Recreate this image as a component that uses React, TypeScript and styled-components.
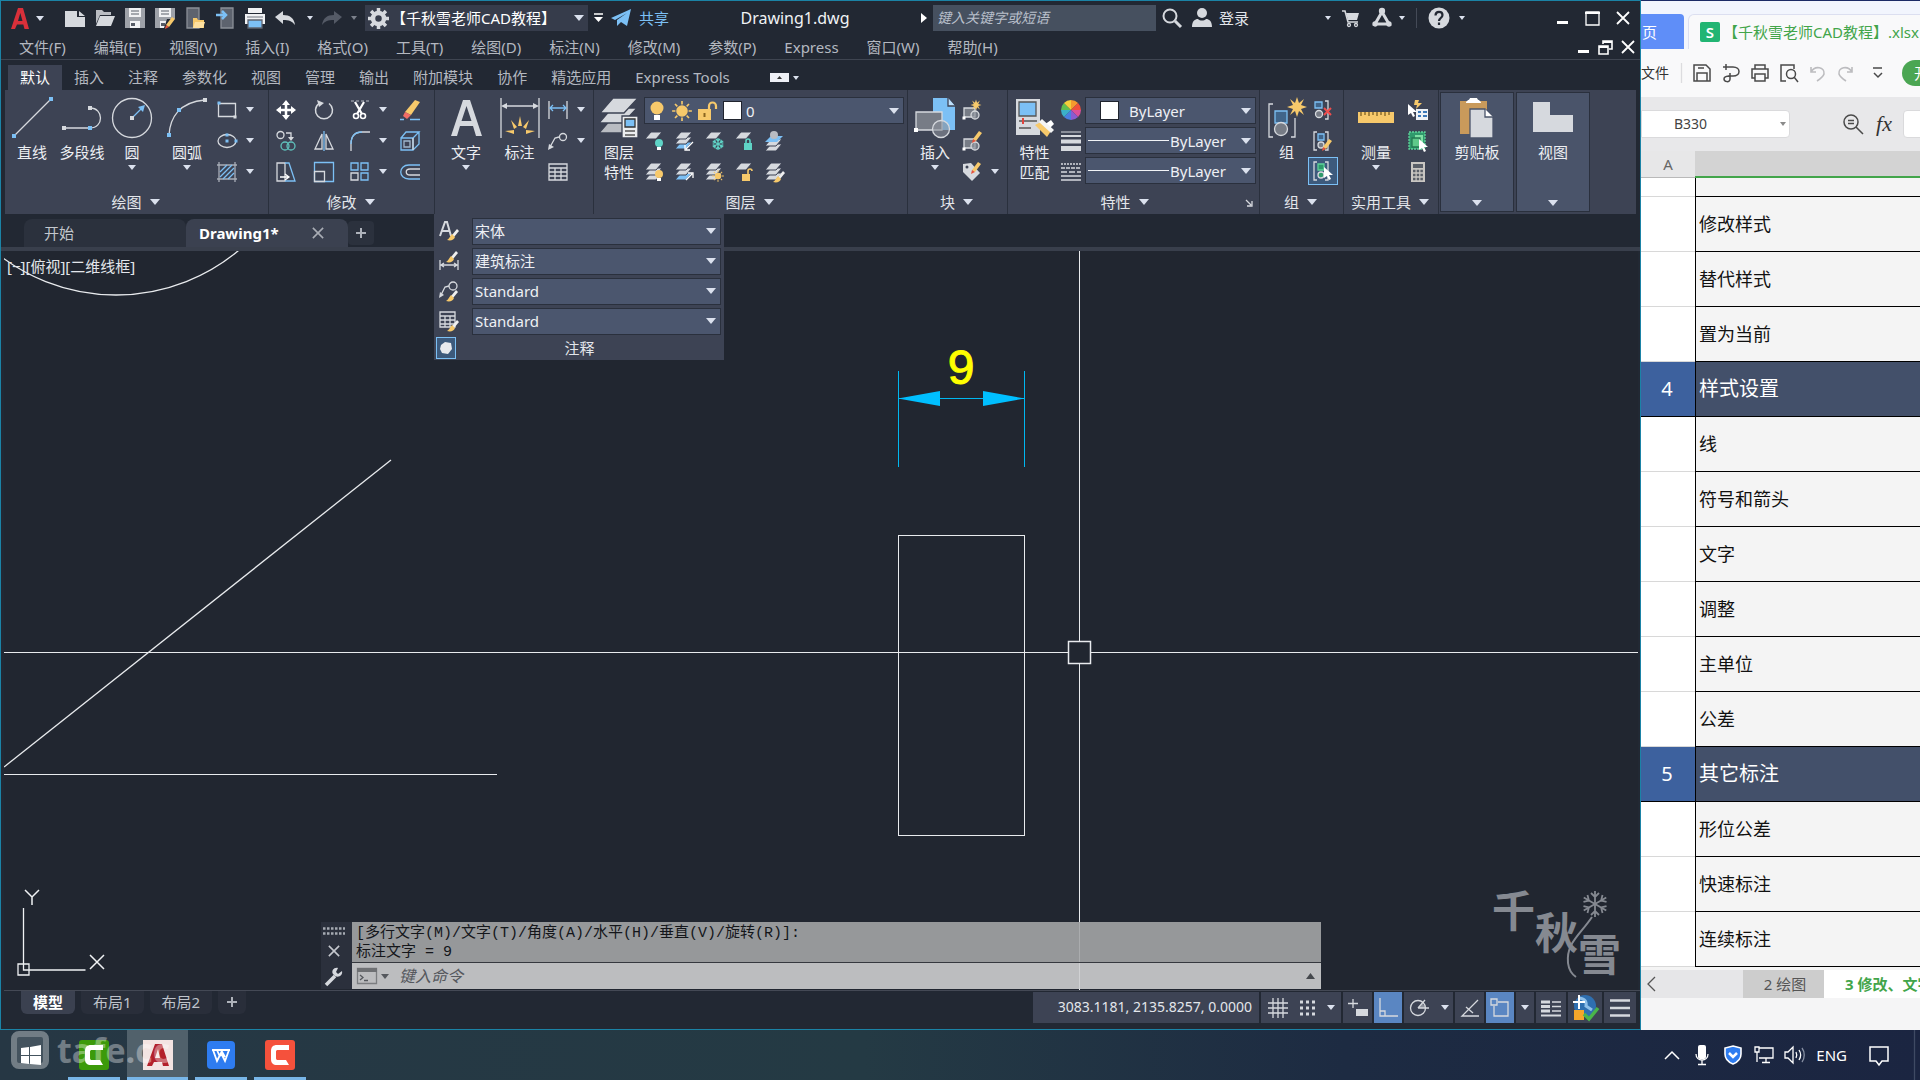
import React from "react";
import styled, { createGlobalStyle, css } from "styled-components";

const c = {
  shell: "#222833",
  canvas: "#212630",
  ribbon: "#3d4354",
  field: "#4b566e",
  panelAlt: "#4a546a",
  edge: "#2a303d",
  cyan: "#1b83a6",
  text: "#e3e6eb",
  muted: "#b4b8c0",
  light: "#d6d9de",
  blue: "#7cc0f5",
  yellow: "#f7c96b",
  green: "#42a54a",
};

const Global = createGlobalStyle`
  *, *::before, *::after { box-sizing: border-box; }
  html, body { margin: 0; padding: 0; }
  body, button, input, select, table {
    font-family: "Noto Sans", "Noto Sans CJK SC", sans-serif;
    font-size: 15px;
    line-height: 20px;
  }
  button, input, select { border: 0; padding: 0; margin: 0; background: none; color: inherit; outline: 0; }
  button { cursor: pointer; white-space: nowrap; }
  svg { display: block; flex: none; overflow: visible; }
`;

/* ---------- shell ---------- */

const Desktop = styled.div`
  display: flex;
  flex-direction: column;
  height: 100vh;
  min-width: 1200px;
  overflow: hidden;
`;

const Windows = styled.div`
  display: flex;
  flex: 1;
  min-height: 0;
`;

const CadWindow = styled.main`
  display: flex;
  flex-direction: column;
  flex: 1;
  min-width: 0;
  overflow: hidden;
  background: ${c.shell};
  color: ${c.text};
  border: 1px solid ${c.cyan};
`;

const Row = styled.div<{ $gap?: number }>`
  display: flex;
  align-items: center;
  gap: ${(p) => p.$gap ?? 0}px;
`;

const IconButton = styled.button`
  display: flex;
  align-items: center;
  justify-content: center;
  flex: none;
`;

const CaretShape = styled.span<{ $size?: number; $color?: string }>`
  flex: none;
  width: 0;
  height: 0;
  border-left: ${(p) => p.$size ?? 4}px solid transparent;
  border-right: ${(p) => p.$size ?? 4}px solid transparent;
  border-top: ${(p) => (p.$size ?? 4) + 1}px solid ${(p) => p.$color ?? "#dbe1ee"};
  pointer-events: none;
`;

/* ---------- title bar ---------- */

const TitleBar = styled.header`
  display: flex;
  align-items: center;
  flex: none;
  height: 34px;
  padding: 0 10px 0 9px;
`;

const QuickAccess = styled(Row)`
  margin-left: 21px;
  gap: 10px;
`;

const HistoryTools = styled(Row)`
  margin: 0 8px 0 12px;
  gap: 9px;
`;

const Workspace = styled.label`
  display: flex;
  align-items: center;
  gap: 2px;
  width: 223px;
  height: 26px;
  padding: 0 4px 0 3px;
  background: #363c4b;
  color: #fff;
`;

const PlainSelect = styled.select`
  appearance: none;
  flex: 1;
  min-width: 0;
  height: 24px;
  line-height: 24px;
`;

const Share = styled.button`
  display: flex;
  align-items: center;
  gap: 8px;
  margin-left: 6px;
  color: ${c.blue};
`;

const DocTitle = styled.h1`
  flex: 1;
  margin: 0;
  font-size: 16px;
  font-weight: 400;
  line-height: 20px;
  text-align: center;
  color: #f0f2f5;
`;

const SearchBox = styled.input`
  width: 223px;
  height: 26px;
  padding: 0 4px 2px;
  background: #46505f;
  font-size: 14px;
  &::placeholder { color: #b8bfca; font-style: italic; opacity: 1; }
`;

const Divider = styled.span`
  width: 1px;
  height: 20px;
  background: #444a57;
`;

const Account = styled(Row)`
  margin-left: 10px;
  gap: 7px;
`;

const HeaderTools = styled(Row)`
  margin-left: 76px;
  gap: 11px;
`;

const WindowButtons = styled(Row)<{ $small?: boolean }>`
  margin-left: ${(p) => (p.$small ? "auto" : "92px")};
  gap: ${(p) => (p.$small ? 8 : 16)}px;
`;

/* ---------- menus and tabs ---------- */

const MenuBar = styled.nav`
  display: flex;
  align-items: center;
  flex: none;
  height: 25px;
  gap: 28px;
  padding: 0 5px 0 18px;
  border-bottom: 1px solid #3f4551;
  color: ${c.muted};
`;

const RibbonTabs = styled.div`
  display: flex;
  align-items: flex-end;
  flex: none;
  height: 30px;
  padding-left: 7px;
  color: ${c.muted};
`;

const RibbonTab = styled.button<{ $active?: boolean }>`
  height: 25px;
  padding: 0 12px 2px;
  ${(p) =>
    p.$active &&
    css`
      background: ${c.ribbon};
      color: #fff;
    `}
`;

const RibbonToggle = styled.button`
  display: flex;
  align-items: center;
  gap: 4px;
  height: 25px;
  margin-left: 28px;
`;

/* ---------- ribbon ---------- */

const Ribbon = styled.div`
  display: flex;
  flex: none;
  height: 124px;
  margin: 0 4px;
  background: ${c.ribbon};
`;

const PanelBox = styled.section<{ $w: number }>`
  position: relative;
  display: flex;
  flex-direction: column;
  flex: none;
  width: ${(p) => p.$w}px;
  border-right: 1px solid ${c.edge};
`;

const PanelBody = styled.div<{ $pad?: number }>`
  display: flex;
  flex: 1;
  padding-left: ${(p) => p.$pad ?? 0}px;
`;

const PanelTitle = styled.button<{ $right?: number }>`
  display: flex;
  align-items: center;
  justify-content: center;
  gap: 8px;
  height: 22px;
  width: 100%;
  padding: 0 ${(p) => p.$right ?? 2}px 2px 0;
  color: ${c.text};
`;

const Launcher = styled.span`
  position: absolute;
  right: 6px;
  bottom: 7px;
`;

const BigButton = styled.button<{ $w: number }>`
  display: flex;
  flex-direction: column;
  align-items: center;
  flex: none;
  width: ${(p) => p.$w}px;
  padding-top: 8px;
  color: #eceef2;
`;

const BigLabel = styled.span`
  display: block;
  margin: 4px 0 3px;
  white-space: pre-line;
`;

const ToolGrid = styled.div<{ $cols: string; $pad?: number }>`
  display: grid;
  grid-template-columns: ${(p) => p.$cols};
  grid-auto-rows: 31px;
  align-content: start;
  padding-top: ${(p) => p.$pad ?? 4}px;
`;

const Tool = styled.button<{ $on?: boolean }>`
  display: flex;
  align-items: center;
  gap: 9px;
  ${(p) =>
    p.$on &&
    css`
      justify-content: center;
      width: 30px;
      height: 28px;
      margin-top: 1px;
      margin-left: -5px;
      background: #3d5a7c;
      border: 1px solid ${c.blue};
    `}
`;

const Stack = styled.div<{ $gap: number; $top: number }>`
  display: flex;
  flex-direction: column;
  gap: ${(p) => p.$gap}px;
  padding-top: ${(p) => p.$top}px;
`;

const Combo = styled.label<{ $w?: number }>`
  display: flex;
  align-items: center;
  flex: none;
  width: ${(p) => (p.$w ? `${p.$w}px` : "auto")};
  height: 27px;
  padding: 0 4px 0 2px;
  background: ${c.field};
  border: 1px solid ${c.edge};
  color: #eef0f4;
`;

const Swatch = styled.span<{ $tight?: boolean }>`
  width: 19px;
  height: 19px;
  margin: 0 ${(p) => (p.$tight ? 4 : 10)}px 0 ${(p) => (p.$tight ? 6 : 12)}px;
  background: #fff;
  border: 1px solid #20242e;
`;

const LineSample = styled.span`
  width: 81px;
  height: 1px;
  margin-right: 1px;
  background: #f2f4f7;
`;

const AltPanel = styled.button`
  display: flex;
  flex-direction: column;
  align-items: center;
  flex: none;
  width: 74px;
  margin: 2px 1px;
  padding: 5px 0 5px;
  background: ${c.panelAlt};
  border: 1px solid ${c.edge};
  color: #eceef2;
  ${CaretShape} { margin-top: auto; }
`;

const Flyout = styled.div`
  position: absolute;
  z-index: 5;
  top: 124px;
  left: -1px;
  width: 290px;
  padding: 2px 3px 0 2px;
  background: ${c.ribbon};
`;

const StyleRow = styled.div`
  display: grid;
  grid-template-columns: 33px 1fr;
  align-items: center;
  height: 30px;
  padding-left: 3px;
`;

const FlyoutFoot = styled.div`
  display: flex;
  align-items: center;
  height: 24px;
  > span { flex: 1; text-align: center; padding-right: 18px; }
`;

const Pin = styled.button`
  display: flex;
  align-items: center;
  justify-content: center;
  width: 20px;
  height: 22px;
  background: #3d5a7c;
  border: 1px solid ${c.blue};
`;

/* ---------- document area ---------- */

const DocTabs = styled.div`
  display: flex;
  align-items: flex-end;
  flex: none;
  height: 37px;
  padding-left: 23px;
  border-bottom: 4px solid #393f4c;
`;

const DocTab = styled.button<{ $active?: boolean }>`
  display: flex;
  align-items: center;
  justify-content: space-between;
  width: 162px;
  height: 28px;
  padding: 0 24px 0 ${(p) => (p.$active ? 13 : 20)}px;
  border-radius: 8px 8px 0 0;
  background: ${(p) => (p.$active ? "#3b4150" : "#2b313d")};
  color: ${(p) => (p.$active ? "#fff" : "#c3c7ce")};
  font-weight: ${(p) => (p.$active ? 700 : 400)};
`;

const AddTab = styled.button`
  display: flex;
  align-items: center;
  justify-content: center;
  width: 26px;
  height: 24px;
  margin-bottom: 2px;
  background: #2b313d;
  border-radius: 4px;
`;

const CanvasArea = styled.div`
  position: relative;
  flex: 1;
  min-height: 0;
  margin: 0 2px 0 3px;
  background: ${c.canvas};
  overflow: hidden;
`;

const Drawing = styled.svg`
  width: 100%;
  height: 100%;
`;

const ViewLabel = styled.div`
  position: absolute;
  top: 5px;
  left: 3px;
`;

const Ucs = styled.div`
  position: absolute;
  left: 12px;
  bottom: 12px;
`;

const Brand = styled.div`
  position: absolute;
  right: 16px;
  bottom: 6px;
  display: grid;
  grid-template-columns: 43px 43px 44px;
  height: 106px;
  color: #858991;
  font-family: "Noto Sans CJK SC", sans-serif;
  font-weight: 700;
  font-size: 43px;
  line-height: 60px;
  white-space: nowrap;
`;

const BrandChar = styled.span<{ $drop: number }>`
  padding-top: ${(p) => p.$drop}px;
`;

const BrandFlake = styled.div`
  position: absolute;
  right: 14px;
  top: 13px;
`;

const CommandLine = styled.div`
  position: absolute;
  left: 317px;
  right: 317px;
  bottom: 1px;
  display: flex;
  color: #14161a;
`;

const CommandHandle = styled.div`
  display: flex;
  flex-direction: column;
  align-items: center;
  justify-content: space-between;
  width: 31px;
  padding: 5px 5px 2px 0;
  background: #2b303c;
`;

const CommandMain = styled.div`
  display: flex;
  flex-direction: column;
  flex: 1;
`;

const CommandHistory = styled.div`
  height: 41px;
  padding: 2px 4px;
  background: rgba(163, 165, 166, 0.9);
  border-bottom: 1px solid #35383e;
  font-family: "Liberation Mono", "Noto Sans CJK SC", monospace;
  line-height: 19px;
  white-space: pre;
`;

const CommandInputRow = styled.label`
  display: flex;
  align-items: center;
  height: 26px;
  gap: 4px;
  padding: 0 6px 0 5px;
  background: rgba(205, 206, 207, 0.9);
`;

const CommandInput = styled.input`
  flex: 1;
  padding-left: 6px;
  font-size: 16px;
  &::placeholder { color: #55585d; font-style: italic; opacity: 1; }
`;

/* ---------- status bar ---------- */

const StatusBar = styled.footer`
  display: flex;
  flex: none;
  height: 39px;
  margin-left: 3px;
  padding-right: 4px;
  border-top: 1px solid #444955;
`;

const LayoutTabs = styled.div`
  display: flex;
  flex: 1;
  gap: 6px;
  padding-left: 17px;
  color: #bfc3ca;
`;

const LayoutTab = styled.button<{ $active?: boolean; $tight?: boolean }>`
  height: 23px;
  padding: 0 ${(p) => (p.$tight ? 8 : 12)}px 2px;
  border-radius: 0 0 6px 6px;
  background: ${(p) => (p.$active ? "#3b4150" : "#292e3a")};
  color: ${(p) => (p.$active ? "#fff" : "inherit")};
  font-weight: ${(p) => (p.$active ? 700 : 400)};
`;

const StatusTools = styled.div`
  display: flex;
  gap: 2px;
  padding-top: 1px;
  height: 32px;
`;

const Coordinates = styled.output`
  width: 226px;
  padding: 5px 7px 0 0;
  text-align: right;
  font-size: 14px;
  background: ${c.ribbon};
  white-space: nowrap;
`;

const StatusButton = styled.button<{ $w: number; $on?: boolean }>`
  display: flex;
  align-items: center;
  justify-content: center;
  gap: 12px;
  width: ${(p) => p.$w}px;
  background: ${(p) => (p.$on ? "#5a86c2" : c.ribbon)};
`;

/* ---------- spreadsheet window ---------- */

const SheetWindow = styled.aside`
  display: flex;
  flex-direction: column;
  flex: 0 0 279px;
  min-width: 0;
  overflow: hidden;
  border-top: 1px solid #1c2b66;
  background: #f4f4f5;
  color: #222;
  white-space: nowrap;
`;

const BookTabs = styled.div`
  display: flex;
  align-items: flex-end;
  flex: none;
  height: 48px;
  background: #f2f5fd;
`;

const HomeTab = styled.button`
  flex: none;
  width: 43px;
  height: 35px;
  margin-right: 4px;
  padding-left: 1px;
  border-radius: 0 4px 0 0;
  background: #5f8ef8;
  color: #fff;
  text-align: left;
`;

const BookTab = styled.button`
  display: flex;
  align-items: center;
  flex: none;
  width: 300px;
  height: 35px;
  padding-left: 11px;
  border-radius: 6px 0 0 0;
  background: #f9f9fa;
  border: 1px solid #dcdff0;
  border-bottom: 0;
  color: ${c.green};
`;

const BookIcon = styled.span`
  width: 20px;
  height: 20px;
  margin-right: 3px;
  border-radius: 2px;
  background: #22b573;
  color: #fff;
  font-weight: 600;
  text-align: center;
`;

const BookToolbar = styled.div`
  display: flex;
  align-items: center;
  flex: none;
  height: 48px;
  gap: 11px;
  background: #f9f9fa;
  color: #333;
`;

const FileMenu = styled.button`
  flex: none;
  width: 29px;
  font-size: 14px;
  text-align: left;
`;

const StartTab = styled.button`
  flex: none;
  width: 60px;
  height: 26px;
  padding-left: 12px;
  border-radius: 13px;
  background: #4ba653;
  color: #fff;
  text-align: left;
`;

const FormulaBar = styled.div`
  display: flex;
  align-items: center;
  flex: none;
  height: 54px;
  background: #e8e8ea;
`;

const NameBox = styled.label`
  display: flex;
  align-items: center;
  flex: none;
  width: 149px;
  height: 28px;
  padding: 0 3px 0 32px;
  border-radius: 0 4px 4px 0;
  border: 1px solid #dadadc;
  background: #fff;
`;

const NameInput = styled.input`
  flex: 1;
  min-width: 0;
  font-size: 14px;
  color: #444;
`;

const Fx = styled.button`
  flex: none;
  width: 20px;
  margin: 0 9px 0 10px;
  font-family: "Liberation Serif", serif;
  font-style: italic;
  font-size: 22px;
  color: #333;
`;

const FormulaInput = styled.input`
  flex: none;
  width: 200px;
  height: 28px;
  padding-left: 14px;
  border-radius: 4px;
  border: 1px solid #dadadc;
  background: #fff;
`;

const SheetBody = styled.div`
  flex: 1;
  min-height: 0;
  overflow: hidden;
  background: #f4f4f4;
`;

const Grid = styled.table`
  width: 100%;
  table-layout: fixed;
  border-collapse: separate;
  border-spacing: 0;
`;

const ColHead = styled.th<{ $active?: boolean }>`
  width: ${(p) => (p.$active ? "auto" : "54px")};
  height: 27px;
  padding: 0;
  font-weight: 400;
  color: #666;
  background: ${(p) => (p.$active ? "#d3d3d3" : "#e7e7e8")};
  border-bottom: ${(p) => (p.$active ? `2px solid ${c.green}` : "1px solid #b9b9b9")};
`;

const NumCell = styled.td<{ $head?: boolean; $h?: number }>`
  height: ${(p) => p.$h ?? 55}px;
  padding: 0 2px 0 0;
  text-align: center;
  font-size: 20px;
  color: #fff;
  background: ${(p) => (p.$head ? "#3d619e" : "#fff")};
  border-bottom: 1px solid ${(p) => (p.$head ? "#000" : "#d8d8d8")};
`;

const TextCell = styled.td<{ $head?: boolean }>`
  padding: 0 3px;
  font-size: ${(p) => (p.$head ? 20 : 18)}px;
  line-height: 24px;
  color: ${(p) => (p.$head ? "#fff" : "#111")};
  background: ${(p) => (p.$head ? "#43506a" : "#f4f4f4")};
  border-left: 1px solid #000;
  border-bottom: 1px solid #000;
`;

const SheetTabs = styled.div`
  display: flex;
  flex: none;
  height: 28px;
  background: #e6e6e8;
`;

const SheetNav = styled.button`
  flex: none;
  width: 102px;
  padding-left: 5px;
`;

const SheetTab = styled.button<{ $active?: boolean }>`
  flex: none;
  width: ${(p) => (p.$active ? 160 : 81)}px;
  padding-left: ${(p) => (p.$active ? 21 : 3)}px;
  text-align: ${(p) => (p.$active ? "left" : "center")};
  background: ${(p) => (p.$active ? "#fff" : "#cdcdcd")};
  color: ${(p) => (p.$active ? c.green : "#555")};
  font-weight: ${(p) => (p.$active ? 700 : 400)};
`;

const SheetFoot = styled.div`
  flex: none;
  height: 32px;
  background: #f5f5f6;
`;

/* ---------- taskbar ---------- */

const Taskbar = styled.footer`
  position: relative;
  display: flex;
  flex: none;
  height: 50px;
  gap: 7px;
  background: linear-gradient(90deg, #263744 0%, #243a44 45%, #1d2b42 70%, #1b2541 100%);
  color: #fff;
`;

const StartButton = styled.button`
  display: flex;
  align-items: center;
  justify-content: center;
  width: 61px;
`;

const TaskButton = styled.button<{ $active?: boolean }>`
  display: flex;
  align-items: center;
  justify-content: center;
  width: ${(p) => (p.$active ? 61 : 52)}px;
  background: ${(p) => (p.$active ? "#51616b" : "transparent")};
  box-shadow: inset 0 -3px 0 #78b6e8;
`;

const Tray = styled.div`
  display: flex;
  align-items: center;
  gap: 12px;
  margin-left: auto;
  padding-right: 5px;
`;

const Stamp = styled.div`
  position: absolute;
  left: 11px;
  top: 1px;
  display: flex;
  align-items: center;
  gap: 8px;
  height: 38px;
  font-family: "Open Sans", sans-serif;
  font-size: 34px;
  font-weight: 700;
  line-height: 38px;
  color: #fff;
  opacity: 0.35;
  pointer-events: none;
`;

const StampBox = styled.span`
  width: 38px;
  height: 38px;
  border: 6px solid #fff;
  border-radius: 8px;
  background: rgba(255, 255, 255, 0.4);
`;

/* ---------- icons ---------- */

type IcoProps = { w?: number; h?: number; vb?: string; children: React.ReactNode };

const Ico = ({ w = 20, h = 20, vb, children }: IcoProps) => (
  <svg width={w} height={h} viewBox={vb ?? `0 0 ${w} ${h}`} fill="none" stroke={c.light} strokeWidth="1.3" aria-hidden="true">
    {children}
  </svg>
);

const Dot = ({ x, y, r = 2, f = c.blue }: { x: number; y: number; r?: number; f?: string }) => (
  <rect x={x - r} y={y - r} width={r * 2} height={r * 2} fill={f} stroke="none" />
);

const Pencil = ({ x = 0, y = 0 }: { x?: number; y?: number }) => (
  <g transform={`translate(${x} ${y})`} stroke="none">
    <path d="M7 0l3 2-6 8-3-2z" fill={c.yellow} />
    <path d="M1 8l3 2-4 2z" fill="#e5533c" />
  </g>
);

const Brush = ({ x = 0, y = 0 }: { x?: number; y?: number }) => (
  <g transform={`translate(${x} ${y})`} stroke="none">
    <path d="M10 0l2 2-5 6-2-2z" fill="#f0f0f0" />
    <path d="M5 5l3 3c-1 3-4 4-8 3 2-1 3-4 5-6z" fill={c.yellow} />
  </g>
);

const Burst = ({ x, y, s = 1 }: { x: number; y: number; s?: number }) => (
  <path
    transform={`translate(${x} ${y}) scale(${s})`}
    d="M0-10l2 6 5-4-3 6 6 2-6 2 3 6-5-4-2 6-2-6-5 4 3-6-6-2 6-2-3-6 5 4z"
    fill={c.yellow}
    stroke="none"
  />
);

const AutodeskA = ({ w = 20, h = 21, color = "#d9303a" }: { w?: number; h?: number; color?: string }) => (
  <svg width={w} height={h} viewBox="0 0 20 21" aria-hidden="true">
    <path d="M8 0h5l6 21h-4.500l-1.200-4.500H7L5 21H1zM10.300 5L8 13h4.500z" fill={color} fillRule="evenodd" />
  </svg>
);

const NewIcon = () => (
  <Ico><path d="M0 3h12v6h8v10H0zM14 3l6 5h-6z" fill={c.light} stroke="none" /></Ico>
);
const OpenIcon = () => (
  <Ico><path d="M1 2h6l2 2h7v3H5L1 16z" fill="#b9bcc2" stroke="none" /><path d="M5 8h15l-4 10H1z" fill={c.light} stroke="none" /></Ico>
);
const SaveIcon = ({ edit }: { edit?: boolean }) => (
  <Ico>
    <path d="M0 0h20v20H0z" fill="#9ea2a9" stroke="none" />
    <path d="M4 0h12v9H4zM5 13h10v7H5z" fill="#f0f1f3" stroke="none" />
    <path d="M6 3h8M6 6h8" stroke="#8b9098" /><path d="M6 15h4v3H6z" fill="#555b66" stroke="none" />
    {edit && <><path d="M9 20l3-9h8v9z" fill={c.shell} stroke="none" /><Pencil x={10} y={9} /></>}
  </Ico>
);
const DeviceFolder = () => (
  <Ico><path d="M2 0h12v20H2z" fill="#5d636e" stroke="#8b9098" /><path d="M8 10h4l1 2h6v8H8z" fill={c.yellow} stroke="none" /><path d="M10 14h10l-2 6H8z" fill="#ffe1a0" stroke="none" /></Ico>
);
const DeviceArrow = () => (
  <Ico><path d="M6 0h12v20H6z" fill="#5d636e" stroke="#8b9098" /><path d="M1 7h9M7 3l4 4-4 4" stroke={c.blue} strokeWidth="2.500" /></Ico>
);
const PrintIcon = () => (
  <Ico><path d="M3 0h14v5H3zM0 6h20v10H0z" fill="#f0f1f3" stroke="none" /><path d="M3 12h14v8H3z" fill={c.blue} stroke="#5d636e" /><path d="M2 9h16" stroke="#8b9098" /></Ico>
);
const UndoIcon = ({ flip, dim }: { flip?: boolean; dim?: boolean }) => (
  <Ico><g transform={flip ? "matrix(-1 0 0 1 20 0)" : undefined}><path d="M0 9l8-6v4c7 0 11 3 12 10-3-4-6-5-12-5v4z" fill={dim ? "#545a66" : c.light} stroke="none" /></g></Ico>
);
const GearIcon = () => (
  <Ico w={21} h={21}>
    <circle cx="10.500" cy="10.500" r="5.500" stroke={c.light} strokeWidth="4.500" />
    <g stroke={c.light} strokeWidth="3.500">{[0, 45, 90, 135].map((a) => <path key={a} transform={`rotate(${a} 10.500 10.500)`} d="M10.500 0v4M10.500 17v4" />)}</g>
  </Ico>
);
const PlaneIcon = () => (
  <Ico><path d="M0 10L20 1l-4 17-6-4-4 4v-6L16 5 4 12z" fill={c.blue} stroke="none" /></Ico>
);
const SearchIcon = () => (
  <Ico><circle cx="8" cy="8" r="6.500" strokeWidth="2" /><path d="M13 13l6 6" strokeWidth="3" /></Ico>
);
const PersonIcon = () => (
  <Ico><circle cx="10" cy="5" r="5" fill={c.light} stroke="none" /><path d="M0 19c0-6 3-8 6-8 2 2 6 2 8 0 3 0 6 2 6 8z" fill={c.light} stroke="none" /></Ico>
);
const CartIcon = () => (
  <Ico w={18}><path d="M0 3h3l3 11h10" strokeWidth="1.600" /><path d="M4 5h13l-2 7H6z" fill={c.light} stroke="none" /><circle cx="7" cy="17" r="1.500" /><circle cx="14" cy="17" r="1.500" /></Ico>
);
const AppsIcon = () => (
  <Ico><path d="M10 4L3 16h14z" strokeWidth="3" /><circle cx="10" cy="3" r="2.500" fill={c.light} /><circle cx="3" cy="16" r="2" fill={c.light} /><circle cx="17" cy="16" r="2" fill={c.light} /></Ico>
);
const HelpIcon = () => (
  <Ico w={22} h={22}><circle cx="11" cy="11" r="10.500" fill={c.light} stroke="none" /><path d="M7.500 8.500c0-5 7-4.500 7-.5 0 3-3.500 3-3.500 6M11 15.500v2.500" stroke={c.shell} strokeWidth="2.200" /></Ico>
);
const MinIcon = () => <Ico w={12} h={16}><path d="M0 12.500h11" stroke="#fff" strokeWidth="3" /></Ico>;
const MaxIcon = () => <Ico w={15} h={15}><path d="M1 1h13v13H1z" stroke="#fff" /><path d="M0 2h15" stroke="#fff" strokeWidth="2" /></Ico>;
const RestoreIcon = () => <Ico w={15} h={15}><path d="M5 4V1h9v8h-3M1 6h9v8H1z" stroke="#fff" strokeWidth="1.600" /><path d="M1 7h9M5 2h9" stroke="#fff" strokeWidth="2" /></Ico>;
const CloseIcon = ({ s = 14, color = "#fff" }: { s?: number; color?: string }) => (
  <Ico w={s} h={s} vb="0 0 14 14"><path d="M1 1l12 12M13 1L1 13" stroke={color} strokeWidth="1.800" /></Ico>
);
const PlusIcon = () => <Ico w={12} h={12}><path d="M6 1v10M1 6h10" stroke="#aeb2ba" strokeWidth="2" /></Ico>;

const big = { w: 40, h: 40 };
const LineIcon = () => <Ico {...big}><path d="M2 38L39 1" /><Dot x={2} y={38} /><Dot x={39} y={1} /></Ico>;
const PolyIcon = () => <Ico {...big}><path d="M2 30h26c14 0 14-20 0-20" /><Dot x={2} y={30} f={c.light} /><Dot x={28} y={30} /><Dot x={28} y={10} f={c.light} /></Ico>;
const CircleIcon = () => <Ico {...big}><circle cx="20" cy="20" r="19.500" /><path d="M20 20l10-10" stroke={c.blue} /><path d="M33 7l-2 7-5-5z" fill={c.blue} stroke="none" /><Dot x={20} y={20} f={c.light} /></Ico>;
const ArcIcon = () => <Ico {...big}><path d="M2 37C3 20 12 4 38 2" /><Dot x={2} y={37} /><Dot x={12} y={12} /><Dot x={38} y={2} f={c.light} /></Ico>;
const RectIcon = () => <Ico><path d="M1.500 3.500h17v13h-17z" /><Dot x={2} y={3} r={1.500} /><Dot x={18} y={17} r={1.500} f={c.light} /></Ico>;
const EllipseIcon = () => <Ico><ellipse cx="10" cy="10" rx="9" ry="6.500" /><Dot x={10} y={4} r={1.500} /><Dot x={10} y={10} r={1.500} /><Dot x={19} y={10} r={1.500} /></Ico>;
const HatchIcon = () => <Ico><path d="M0 3h20M0 17h20M2 0v20M18 0v20" stroke="#a8adb7" /><path d="M3 10l7-7M3 15L15 3M6 17L17 6M11 17l6-6" stroke={c.blue} /></Ico>;
const MoveIcon = () => (
  <Ico><path d="M10 2v16M2 10h16" strokeWidth="2.500" stroke="#fff" /><path d="M10 0l4 5H6zM10 20l4-5H6zM0 10l5-4v8zM20 10l-5-4v8z" fill="#fff" stroke="none" /></Ico>
);
const RotateIcon = () => <Ico><path d="M5 3.500A8.500 8.500 0 1 0 15 3.500" strokeWidth="1.500" /><path d="M9 0l7 3-5 4z" fill={c.light} stroke="none" transform="translate(-6 0)" /></Ico>;
const TrimIcon = () => <Ico><path d="M1 1h18" stroke="#8f949e" strokeDasharray="3 2" /><path d="M5 2l7 12M14 2L7 14" stroke="#fff" strokeWidth="2.200" /><circle cx="6" cy="16" r="2.500" stroke="#fff" strokeWidth="1.600" /><circle cx="13" cy="16" r="2.500" stroke="#fff" strokeWidth="1.600" /></Ico>;
const EraseIcon = () => <Ico><path d="M15 0l5 2-9 13-6-3z" fill={c.yellow} stroke="none" /><path d="M5 12l6 3-4 4-4-3z" fill="#f06d66" stroke="none" /><path d="M0 19.500h4M10 19.500h10" stroke={c.blue} /></Ico>;
const CopyIcon = () => <Ico><circle cx="4.500" cy="4" r="3.500" /><path d="M10 2h5v5" /><path d="M12 6h6l-3 4z" fill={c.light} stroke="none" /><g stroke="#5fc0bb"><circle cx="9" cy="15" r="4" /><circle cx="15" cy="15" r="4" /></g></Ico>;
const MirrorIcon = () => <Ico><path d="M10 0v20" stroke={c.blue} /><path d="M8 3v15H1zM12 3v15h7z" /></Ico>;
const FilletIcon = () => <Ico><path d="M1 20V13C1 5 5 1 12 1h8" /><path d="M1 13C1 5 5 1 12 1" stroke={c.blue} /></Ico>;
const BoxIcon = () => <Ico><path d="M1 7h12v12H1zM1 7l5-6h13l-6 6M19 1v12l-6 6" stroke={c.blue} /><path d="M4 10h6v6H4z" stroke="#9fb6cc" /><path d="M13 7v12" /></Ico>;
const StretchIcon = () => <Ico><path d="M1 1h8v18H1z" /><path d="M9 1h4l6 18H9" stroke={c.blue} /><path d="M4 15h8M9 12l4 3-4 3" stroke="#fff" /></Ico>;
const ScaleIcon = () => <Ico><path d="M.5.5h19v19H.5z" stroke={c.blue} /><path d="M.5 9.500h10v10H.5z" /></Ico>;
const ArrayIcon = () => <Ico><path d="M1 1h7v7H1zM11 1h7v7h-7zM11 11h7v7h-7z" stroke={c.blue} /><path d="M1 11h7v7H1z" /></Ico>;
const OffsetIcon = () => <Ico><path d="M20 3H9C-2 3-2 17 9 17h11" stroke={c.blue} /><path d="M20 7H10c-5 0-5 6 0 6h10" /></Ico>;
const TextIcon = () => <Ico {...big}><path d="M17 2h7l12 36h-6l-3-10H14l-3 10H5zM20.500 8l-5 15h10z" fill={c.light} fillRule="evenodd" stroke="none" /></Ico>;
const DimBigIcon = () => (
  <Ico {...big}><path d="M1 0v40M39 0v40M3 8h34" /><path d="M1 8l6-3v6zM39 8l-6-3v6z" fill={c.light} stroke="none" /><path d="M20 18l2 10h-4zM11 22l6 7-3 2zM29 22l-6 7 3 2zM5 33l9-1v4zM35 33l-9-1v4z" fill={c.yellow} stroke="none" /></Ico>
);
const DimIcon = () => <Ico><path d="M1 1v18M19 1v18" /><path d="M2 8h16M5 5L2 8l3 3M15 5l3 3-3 3" stroke={c.blue} /></Ico>;
const LeaderIcon = () => <Ico><circle cx="15" cy="6" r="3.500" /><path d="M11 6L7 7 2 16" /><path d="M0 19l1-6 5 3z" fill={c.light} stroke="none" /></Ico>;
const TableIcon = () => <Ico><path d="M1 2h18v16H1zM1 6h18M1 10h18M1 14h18M7 6v12M13 6v12" /></Ico>;

const Sheets = ({ n = 3, y = 0, last = "#d6d9de" }: { n?: number; y?: number; last?: string }) => (
  <g stroke={c.ribbon} strokeWidth="1">
    {Array.from({ length: n }, (_, i) => n - 1 - i).map((i) => (
      <path key={i} d={`M7 ${y + i * 5}h11l-6 7H1z`} fill={i === n - 1 ? last : "#d6d9de"} />
    ))}
  </g>
);
const BulbShape = ({ x, y, f }: { x: number; y: number; f: string }) => (
  <g stroke="none"><circle cx={x} cy={y} r="4" fill={f} /><path d={`M${x - 2} ${y + 4}h4v3h-4z`} fill="#fff" /></g>
);
const LockShape = ({ x, y, f, open }: { x: number; y: number; f: string; open?: boolean }) => (
  <g><path d={open ? `M${x + 6} ${y}v-3a2 2 0 0 1 4 0` : `M${x + 2} ${y}v-2a2 2 0 0 1 4 0v2`} stroke={f} strokeWidth="1.600" /><path d={`M${x} ${y}h8v7h-8z`} fill={f} stroke="none" /></g>
);
const SunShape = ({ x, y, s = 1, f = c.yellow }: { x: number; y: number; s?: number; f?: string }) => (
  <g transform={`translate(${x} ${y}) scale(${s})`} stroke={f} strokeWidth="1.500">
    <circle r="4.500" fill={f} />
    {[0, 45, 90, 135].map((a) => <path key={a} transform={`rotate(${a})`} d="M0-9v3M0 6v3" />)}
  </g>
);
const SnowShape = ({ x, y }: { x: number; y: number }) => (
  <g transform={`translate(${x} ${y})`} stroke="#5fd3c6" strokeWidth="1.300">
    {[0, 60, 120].map((a) => <path key={a} transform={`rotate(${a})`} d="M0-6v12M-2-5l2 2 2-2M-2 5l2-2 2 2" />)}
  </g>
);
const LayerBig = () => (
  <Ico {...big}><g stroke={c.ribbon}><path d="M13 20h25L24 35H0z" fill="#b9bcc2" /><path d="M13 10h25L24 25H0z" fill={c.light} /><path d="M14 0h25L25 15H1z" fill={c.light} /></g><path d="M23 18h16v22H23z" fill="#eceef0" stroke={c.ribbon} /><path d="M26 21h10v8H26z" fill={c.blue} stroke="#333" /><path d="M26 33h10M26 37h10" stroke="#555" /></Ico>
);
const LayerOff = () => <Ico><Sheets n={1} y={1} /><BulbShape x={15} y={12} f="#5fd3c6" /></Ico>;
const LayerIso = () => <Ico><Sheets last={c.blue} y={1} /><path d="M19 11l-7 7M11 14v5h5" stroke="#fff" /></Ico>;
const LayerFreeze = () => <Ico><Sheets n={1} y={1} /><SnowShape x={14} y={13} /></Ico>;
const LayerLock = () => <Ico><Sheets n={1} y={1} /><LockShape x={10} y={12} f="#5fd3c6" /></Ico>;
const LayerCurrent = () => <Ico><Sheets n={2} y={8} /><path d="M7 5h12l-6 6H1z" fill={c.blue} stroke="none" /><circle cx="10" cy="4" r="4" fill="#b9bcc2" stroke="none" /></Ico>;
const LayerOn = () => <Ico><Sheets y={1} /><BulbShape x={15} y={12} f={c.yellow} /></Ico>;
const LayerUniso = () => <Ico><Sheets last={c.blue} y={1} /><path d="M12 18l6-6M14 11h5v5" stroke="#fff" /></Ico>;
const LayerThaw = () => <Ico><Sheets y={1} /><SunShape x={14} y={14} s={0.65} /></Ico>;
const LayerUnlock = () => <Ico><Sheets n={1} y={1} /><LockShape x={8} y={12} f={c.yellow} open /></Ico>;
const LayerMatch = () => <Ico><Sheets y={1} /><Brush x={9} y={9} /></Ico>;
const BulbIcon = () => <Ico><circle cx="10" cy="7" r="6.500" fill={c.yellow} stroke="none" /><path d="M7 14h6v5H7z" fill="#fff" stroke="none" /></Ico>;
const SunIcon = () => <Ico><SunShape x={10} y={10} s={1.100} /></Ico>;
const UnlockIcon = () => <Ico><path d="M1 8h13v11H1z" fill={c.yellow} stroke="none" /><path d="M12 8V5a3.500 3.500 0 0 1 7 0v3" stroke={c.yellow} strokeWidth="2.200" /><path d="M7.500 12v4" stroke="#8a6520" strokeWidth="2" /></Ico>;

const InsertIcon = () => (
  <Ico {...big}><path d="M18 0h15l7 8v24H18z" fill={c.blue} stroke="none" /><path d="M33 0v8h7" fill="#bfe0fb" stroke={c.ribbon} /><path d="M1 14h26v18H1z" fill="#777c86" stroke={c.light} /><circle cx="26" cy="31" r="8.500" fill="rgba(140,145,155,.6)" /><Dot x={1} y={32} f="#fff" /></Ico>
);
const BlockBase = () => <><path d="M2 8h11v9H2z" fill="#777c86" /><circle cx="13" cy="15" r="4" fill="rgba(140,145,155,.7)" /><Dot x={2} y={18} r={1.500} f="#fff" /></>;
const BlockNew = () => <Ico><BlockBase /><Burst x={14} y={5} s={0.55} /></Ico>;
const BlockEdit = () => <Ico><BlockBase /><Pencil x={10} y={0} /></Ico>;
const TagIcon = () => <Ico><path d="M1 2l8-1 9 10-8 8L1 10z" fill={c.light} stroke="none" /><circle cx="5" cy="5" r="1.500" fill={c.ribbon} stroke="none" /><Pencil x={9} y={0} /></Ico>;
const MatchProps = () => (
  <Ico {...big}><path d="M1 1h24v36H1z" fill={c.light} stroke="none" /><path d="M4 4h17v14H4z" fill={c.blue} stroke="#555" /><path d="M4 23h18M4 30h12" stroke="#555" /><path d="M8 20v6" stroke="#e0443c" strokeWidth="2" /><path d="M36 22l3 4-5 5-5-4z" fill="#fff" stroke="none" /><path d="M20 27l6-3 10 9-4 6z" fill={c.yellow} stroke="none" /><path d="M24 24l3-3 12 11-3 3z" fill="#f4f4f4" stroke="none" /></Ico>
);
const ColorWheel = () => (
  <Ico>
    {["#f59a2e", "#f0503c", "#d9509a", "#8a5bd0", "#4a7fe0", "#3bb0c9", "#63bf4f", "#f4cf3a"].map((f, i) => (
      <path key={f} transform={`rotate(${i * 45} 10 10)`} d="M10 10V0a10 10 0 0 1 7.070 2.930z" fill={f} stroke="none" />
    ))}
  </Ico>
);
const WeightIcon = () => <Ico><path d="M0 1h20" strokeWidth="1" /><path d="M0 5h20" strokeWidth="2" /><path d="M0 10.500h20" strokeWidth="4" /><path d="M0 17.500h20" strokeWidth="5" /></Ico>;
const LinetypeIcon = () => <Ico><path d="M0 2h20" strokeDasharray="2 1" /><path d="M0 6h20" strokeDasharray="4 1" /><path d="M0 10h20" strokeDasharray="6 2" /><path d="M0 14h20M0 18h20" /></Ico>;
const GroupBig = () => (
  <Ico {...big}><path d="M6 6H2v33h4M24 39h4V20" /><path d="M8 13h12v12H8z" fill="#41658a" stroke={c.blue} /><circle cx="14" cy="31" r="6.500" fill="#777c86" /><Burst x={30} y={9} /></Ico>
);
const GroupBase = ({ on }: { on?: boolean }) => <><path d="M4 1H1v18h3M12 1h3v18h-3" /><path d="M5 3h6v6H5z" fill={on ? "#2f9a6c" : "#41658a"} stroke={on ? "#5fd39a" : c.blue} /><circle cx="8" cy="14" r="3" fill={on ? "#2f9a6c" : "#777c86"} /></>;
const Ungroup = () => <Ico><path d="M12 1h3v18h-3" /><path d="M2 2h7v6H2z" fill="#41658a" stroke={c.blue} /><circle cx="6" cy="14" r="3.500" fill="#777c86" /><path d="M11 8l7 7M18 8l-7 7" stroke="#ef4d4d" strokeWidth="2" /></Ico>;
const GroupEdit = () => <Ico><GroupBase /><Pencil x={9} y={8} /></Ico>;
const Pointer = ({ x, y }: { x: number; y: number }) => <path transform={`translate(${x} ${y})`} d="M0 0v11l3-2 2 4 2-1-2-4h4z" fill="#fff" stroke="none" />;
const GroupSelect = () => <Ico><GroupBase on /><Pointer x={11} y={6} /></Ico>;
const RulerIcon = () => <Ico {...big}><path d="M2 14h36v11H2z" fill={c.yellow} stroke="none" /><path d="M5 14v4M9 14v3M13 14v4M17 14v3M21 14v4M25 14v3M29 14v4M33 14v3" stroke="#7d6124" /></Ico>;
const QuickSelect = () => <Ico><path d="M8 9h12v11H8z" fill="#eef2f6" stroke="none" /><path d="M10 12h3M10 16h3M15 12h4M15 16h4" stroke="#3b78b8" strokeWidth="1.800" /><Pointer x={0} y={4} /><path d="M7 0h4l-1 3h4l-6 6 1-4H6z" fill={c.yellow} stroke="none" /></Ico>;
const SelectAll = () => <Ico><path d="M1 1h16v17H1z" fill="#2f9a6c" stroke="#5fd39a" strokeDasharray="2 1" /><path d="M7 4h8v9H7z" fill="#7ee0a4" stroke="none" /><path d="M4 7h8v9H4z" fill="#5fc98a" stroke="#247a52" /><Pointer x={11} y={8} /></Ico>;
const CalcIcon = () => <Ico><path d="M3 0h14v20H3z" fill="#c9c6c2" stroke="none" /><path d="M5 2h10v4H5z" fill="#5a5f68" stroke="none" /><path d="M5 9h10M5 13h10M5 17h10" stroke="#5a5f68" strokeWidth="2.400" strokeDasharray="2.500 1.200" /></Ico>;
const ClipboardIcon = () => <Ico {...big}><path d="M3 3h27v33H3z" fill="#c99a5b" stroke="none" /><path d="M9 5c0-3 3-2 4-5h7c1 3 4 2 4 5z" fill="#fff" stroke="none" /><path d="M13 11h15l8 8v21H13z" fill={c.light} stroke={c.panelAlt} /><path d="M28 11v8h8" fill="#fff" stroke={c.panelAlt} /></Ico>;
const ViewIcon = () => <Ico {...big}><path d="M0 4h17v13h23v17H0z" fill={c.light} stroke="none" /></Ico>;

/* ---------- small composites ---------- */

const Caret = CaretShape;

const Big = ({ w, icon, label, menu }: { w: number; icon: React.ReactNode; label: string; menu?: boolean }) => (
  <BigButton $w={w}>
    {icon}
    <BigLabel>{label}</BigLabel>
    {menu && <Caret />}
  </BigButton>
);

const ToolItem = ({ icon, name, menu, on }: { icon: React.ReactNode; name: string; menu?: boolean; on?: boolean }) => (
  <Tool aria-label={name} $on={on}>
    {icon}
    {menu && <Caret />}
  </Tool>
);

type PanelProps = { w: number; title?: string; titleRight?: number; pad?: number; children: React.ReactNode; extra?: React.ReactNode };

const Panel = ({ w, title, titleRight, pad, children, extra }: PanelProps) => (
  <PanelBox $w={w}>
    <PanelBody $pad={pad}>{children}</PanelBody>
    {title && (
      <PanelTitle $right={titleRight}>
        {title}
        <Caret $size={5} />
      </PanelTitle>
    )}
    {extra}
  </PanelBox>
);

const Select = ({ label, value }: { label: string; value: string }) => (
  <>
    <PlainSelect aria-label={label} defaultValue={value}>
      <option>{value}</option>
    </PlainSelect>
    <Caret $size={5} />
  </>
);

const quickTools: [string, React.ReactNode][] = [
  ["新建", <NewIcon />],
  ["打开", <OpenIcon />],
  ["保存", <SaveIcon />],
  ["另存为", <SaveIcon edit />],
  ["从移动设备打开", <DeviceFolder />],
  ["保存到移动设备", <DeviceArrow />],
  ["打印", <PrintIcon />],
  ["放弃", <UndoIcon />],
];

const menus = ["文件(F)", "编辑(E)", "视图(V)", "插入(I)", "格式(O)", "工具(T)", "绘图(D)", "标注(N)", "修改(M)", "参数(P)", "Express", "窗口(W)", "帮助(H)"];
const ribbonTabs = ["默认", "插入", "注释", "参数化", "视图", "管理", "输出", "附加模块", "协作", "精选应用", "Express Tools"];

const annotationStyles: [string, string, React.ReactNode][] = [
  ["文字样式", "宋体", <Ico><path d="M1 15L6 1h2l4 14M3 10h7" strokeWidth="2" /><Brush x={8} y={8} /></Ico>],
  ["标注样式", "建筑标注", <Ico><path d="M1 9v10M19 9v10M2 14h16M5 12l-3 2 3 2M15 12l3 2-3 2" /><Brush x={7} y={0} /></Ico>],
  ["多重引线样式", "Standard", <Ico><circle cx="14" cy="5" r="4" /><path d="M10 5L6 6 2 14" /><path d="M0 17l1-6 4 3z" fill={c.light} stroke="none" /><Brush x={7} y={9} /></Ico>],
  ["表格样式", "Standard", <Ico><path d="M1 1h15v15H1zM1 5h15M1 9h15M1 13h15M6 5v11M11 5v11" /><Brush x={8} y={9} /></Ico>],
];

const sheetRows: { n?: string; t: string }[] = [
  { t: "修改样式" }, { t: "替代样式" }, { t: "置为当前" }, { n: "4", t: "样式设置" }, { t: "线" }, { t: "符号和箭头" }, { t: "文字" },
  { t: "调整" }, { t: "主单位" }, { t: "公差" }, { n: "5", t: "其它标注" }, { t: "形位公差" }, { t: "快速标注" }, { t: "连续标注" },
];

const CadTitle = () => (
  <TitleBar>
    <Row $gap={6}>
      <IconButton aria-label="应用程序菜单"><AutodeskA /></IconButton>
      <Caret />
    </Row>
    <QuickAccess>
      {quickTools.map(([name, icon]) => <IconButton key={name} aria-label={name}>{icon}</IconButton>)}
    </QuickAccess>
    <HistoryTools>
      <Caret $size={3} />
      <IconButton aria-label="重做"><UndoIcon flip dim /></IconButton>
      <Caret $size={3} $color="#7b808b" />
    </HistoryTools>
    <Workspace>
      <GearIcon />
      <Select label="工作空间" value="【千秋雪老师CAD教程】" />
    </Workspace>
    <Share>
      <Ico w={9} h={10}><path d="M0 1h9" stroke="#fff" strokeWidth="1.500" /><path d="M0 4h9L4.500 9z" fill="#fff" stroke="none" /></Ico>
      <PlaneIcon />
      共享
    </Share>
    <DocTitle>Drawing1.dwg</DocTitle>
    <Row $gap={6}>
      <Ico w={6} h={10}><path d="M0 0l6 5-6 5z" fill="#fff" stroke="none" /></Ico>
      <SearchBox aria-label="搜索" placeholder="键入关键字或短语" />
      <IconButton aria-label="搜索"><SearchIcon /></IconButton>
    </Row>
    <Account>
      <PersonIcon />
      <button>登录</button>
    </Account>
    <HeaderTools>
      <Caret $size={3} />
      <Row $gap={12}>
        <IconButton aria-label="购物车"><CartIcon /></IconButton>
        <Row $gap={7}>
          <IconButton aria-label="应用"><AppsIcon /></IconButton>
          <Caret $size={3} />
        </Row>
      </Row>
      <Divider />
      <Row $gap={9}>
        <IconButton aria-label="帮助"><HelpIcon /></IconButton>
        <Caret $size={3} />
      </Row>
    </HeaderTools>
    <WindowButtons>
      <IconButton aria-label="最小化"><MinIcon /></IconButton>
      <IconButton aria-label="最大化"><MaxIcon /></IconButton>
      <IconButton aria-label="关闭"><CloseIcon /></IconButton>
    </WindowButtons>
  </TitleBar>
);

const AnnotationFlyout = () => (
  <Flyout>
    {annotationStyles.map(([name, value, icon]) => (
      <StyleRow key={name}>
        {icon}
        <Combo><Select label={name} value={value} /></Combo>
      </StyleRow>
    ))}
    <FlyoutFoot>
      <Pin aria-label="固定"><Ico w={14} h={14}><path d="M2 4l4-3 6 1 1 6-4 5-6-1-2-4z" fill="#e8eaee" stroke="none" /></Ico></Pin>
      <span>注释</span>
    </FlyoutFoot>
  </Flyout>
);

const CadRibbon = () => (
  <Ribbon>
    <Panel w={264} title="绘图" pad={2}>
      <Big w={50} icon={<LineIcon />} label="直线" />
      <Big w={50} icon={<PolyIcon />} label="多段线" />
      <Big w={50} icon={<CircleIcon />} label="圆" menu />
      <Big w={60} icon={<ArcIcon />} label="圆弧" menu />
      <ToolGrid $cols="40px">
        <ToolItem name="矩形" icon={<RectIcon />} menu />
        <ToolItem name="椭圆" icon={<EllipseIcon />} menu />
        <ToolItem name="图案填充" icon={<HatchIcon />} menu />
      </ToolGrid>
    </Panel>
    <Panel w={166} title="修改" pad={7}>
      <ToolGrid $cols="38px 36px 50px 20px">
        <ToolItem name="移动" icon={<MoveIcon />} />
        <ToolItem name="旋转" icon={<RotateIcon />} />
        <ToolItem name="修剪" icon={<TrimIcon />} menu />
        <ToolItem name="删除" icon={<EraseIcon />} />
        <ToolItem name="复制" icon={<CopyIcon />} />
        <ToolItem name="镜像" icon={<MirrorIcon />} />
        <ToolItem name="圆角" icon={<FilletIcon />} menu />
        <ToolItem name="分解" icon={<BoxIcon />} />
        <ToolItem name="拉伸" icon={<StretchIcon />} />
        <ToolItem name="缩放" icon={<ScaleIcon />} />
        <ToolItem name="阵列" icon={<ArrayIcon />} menu />
        <ToolItem name="偏移" icon={<OffsetIcon />} />
      </ToolGrid>
    </Panel>
    <Panel w={159} pad={6} extra={<AnnotationFlyout />}>
      <Big w={50} icon={<TextIcon />} label="文字" menu />
      <Big w={57} icon={<DimBigIcon />} label="标注" />
      <ToolGrid $cols="40px">
        <ToolItem name="线性" icon={<DimIcon />} menu />
        <ToolItem name="引线" icon={<LeaderIcon />} menu />
        <ToolItem name="表格" icon={<TableIcon />} />
      </ToolGrid>
    </Panel>
    <Panel w={314} title="图层">
      <Big w={50} icon={<LayerBig />} label={"图层\n特性"} />
      <Stack $gap={0} $top={7}>
        <Combo $w={260}>
          <Row $gap={5}>
            <BulbIcon />
            <SunIcon />
            <UnlockIcon />
          </Row>
          <Swatch $tight />
          <Select label="图层" value="0" />
        </Combo>
        <ToolGrid $cols="repeat(5, 30px)" $pad={1}>
          <ToolItem name="关" icon={<LayerOff />} />
          <ToolItem name="隔离" icon={<LayerIso />} />
          <ToolItem name="冻结" icon={<LayerFreeze />} />
          <ToolItem name="锁定" icon={<LayerLock />} />
          <ToolItem name="置为当前图层" icon={<LayerCurrent />} />
          <ToolItem name="打开所有图层" icon={<LayerOn />} />
          <ToolItem name="取消隔离" icon={<LayerUniso />} />
          <ToolItem name="解冻" icon={<LayerThaw />} />
          <ToolItem name="解锁" icon={<LayerUnlock />} />
          <ToolItem name="匹配图层" icon={<LayerMatch />} />
        </ToolGrid>
      </Stack>
    </Panel>
    <Panel w={100} title="块">
      <Big w={54} icon={<InsertIcon />} label="插入" menu />
      <ToolGrid $cols="40px">
        <ToolItem name="创建块" icon={<BlockNew />} />
        <ToolItem name="编辑块" icon={<BlockEdit />} />
        <ToolItem name="编辑属性" icon={<TagIcon />} menu />
      </ToolGrid>
    </Panel>
    <Panel
      w={252}
      title="特性"
      titleRight={18}
      extra={<Launcher><Ico w={8} h={8}><path d="M1 1l5 5M7 2v5H2" /></Ico></Launcher>}
    >
      <Big w={53} icon={<MatchProps />} label={"特性\n匹配"} />
      <ToolGrid $cols="24px">
        <ToolItem name="对象颜色" icon={<ColorWheel />} />
        <ToolItem name="线宽" icon={<WeightIcon />} />
        <ToolItem name="线型" icon={<LinetypeIcon />} />
      </ToolGrid>
      <Stack $gap={3} $top={7}>
        <Combo $w={171}>
          <Swatch />
          <Select label="对象颜色" value="ByLayer" />
        </Combo>
        <Combo $w={171}><LineSample /><Select label="线宽" value="ByLayer" /></Combo>
        <Combo $w={171}><LineSample /><Select label="线型" value="ByLayer" /></Combo>
      </Stack>
    </Panel>
    <Panel w={84} title="组">
      <Big w={53} icon={<GroupBig />} label="组" />
      <ToolGrid $cols="24px">
        <ToolItem name="解除编组" icon={<Ungroup />} />
        <ToolItem name="组编辑" icon={<GroupEdit />} />
        <ToolItem name="启用组选择" icon={<GroupSelect />} on />
      </ToolGrid>
    </Panel>
    <Panel w={95} title="实用工具">
      <Big w={64} icon={<RulerIcon />} label="测量" menu />
      <ToolGrid $cols="24px">
        <ToolItem name="快速选择" icon={<QuickSelect />} />
        <ToolItem name="全部选择" icon={<SelectAll />} />
        <ToolItem name="计算器" icon={<CalcIcon />} />
      </ToolGrid>
    </Panel>
    <AltPanel><ClipboardIcon /><BigLabel>剪贴板</BigLabel><Caret $size={5} /></AltPanel>
    <AltPanel><ViewIcon /><BigLabel>视图</BigLabel><Caret $size={5} /></AltPanel>
  </Ribbon>
);

const Model = () => (
  <CanvasArea>
    <Drawing fill="none" stroke="#e9ebee" strokeWidth="1" role="img" aria-label="图形">
      <circle cx="112" cy="-147" r="191" strokeWidth="1.300" />
      <path d="M0 516L387 209" strokeWidth="1.300" />
      <path d="M0 523.500h493" />
      <rect x="894.500" y="284.500" width="126" height="300" />
      <g stroke="#00b7f0">
        <path d="M894.500 120v96M1020.500 120v96M894 147.500h127" />
        <path d="M894 147.500l42-7.500v15zM1021 147.500l-42-7.500v15z" fill="#00bfff" stroke="none" />
      </g>
      <text x="957" y="133" fill="#ffff00" stroke="#ffff00" fontSize="48" fontFamily="'Liberation Sans', sans-serif" textAnchor="middle">9</text>
      <line x1="0" y1="401.500" x2="1064" y2="401.500" />
      <line x1="1087" y1="401.500" x2="100%" y2="401.500" />
      <line x1="1075.500" y1="0" x2="1075.500" y2="390" />
      <line x1="1075.500" y1="413" x2="1075.500" y2="100%" />
      <rect x="1064.500" y="390.500" width="22" height="22" strokeWidth="1.500" />
    </Drawing>
    <ViewLabel>[−][俯视][二维线框]</ViewLabel>
    <Ucs>
      <Ico w={90} h={90}>
        <path d="M7.500 20v62h62M2 76h11v11H2z" stroke="#f0f2f4" />
        <path d="M9 2l7 7 7-7M16 9v8M74 67l14 14M88 67L74 81" stroke="#f0f2f4" strokeWidth="1.500" />
      </Ico>
    </Ucs>
    <Brand>
      <BrandChar $drop={0}>千</BrandChar>
      <BrandChar $drop={22}>秋</BrandChar>
      <BrandChar $drop={44}>雪</BrandChar>
      <BrandFlake>
        <Ico w={26} h={26}>
          <g stroke="#858991" strokeWidth="1.800">
            {[0, 60, 120, 180, 240, 300].map((a) => <path key={a} transform={`rotate(${a} 13 13)`} d="M13 13V0M9 2l4 4 4-4" />)}
          </g>
          <path d="M10 26C-2 44-16 52-14 72c1 8 5 12 8 14" stroke="#858991" strokeWidth="2" />
        </Ico>
      </BrandFlake>
    </Brand>
    <CommandLine>
      <CommandHandle>
        <Ico w={22} h={8}><path d="M0 1.500h22M0 6.500h22" strokeWidth="2.500" strokeDasharray="2.500 1.500" stroke="#a6aab2" /></Ico>
        <CloseIcon s={12} color="#c5c8ce" />
        <Ico><path d="M2 18l9-9" strokeWidth="3.500" /><path d="M18 4l-4 3-2-2 2-4c-4-1-7 3-5 6l2 2c4 2 8-1 7-5z" fill={c.light} stroke="none" /></Ico>
      </CommandHandle>
      <CommandMain>
        <CommandHistory>{"[多行文字(M)/文字(T)/角度(A)/水平(H)/垂直(V)/旋转(R)]:\n标注文字 = 9"}</CommandHistory>
        <CommandInputRow>
          <Ico w={20} h={16}><path d="M.5.5h19v15H.5z" stroke="#7b7d80" /><path d="M0 0h20v4H0z" fill="#6e7073" stroke="none" /><path d="M3 7l3 2.500L3 12M7 12.500h4" stroke="#55585d" /></Ico>
          <Caret $color="#55585d" />
          <CommandInput aria-label="命令" placeholder="键入命令" />
          <Ico w={9} h={6}><path d="M0 6l4.500-6L9 6z" fill="#45484d" stroke="none" /></Ico>
        </CommandInputRow>
      </CommandMain>
    </CommandLine>
  </CanvasArea>
);

const CadStatus = () => (
  <StatusBar>
    <LayoutTabs>
      <LayoutTab $active>模型</LayoutTab>
      <LayoutTab>布局1</LayoutTab>
      <LayoutTab>布局2</LayoutTab>
      <LayoutTab $tight aria-label="新建布局"><PlusIcon /></LayoutTab>
    </LayoutTabs>
    <StatusTools>
      <Coordinates>3083.1181, 2135.8257, 0.0000</Coordinates>
      <StatusButton $w={80} aria-label="栅格和捕捉">
        <Ico><path d="M0 5h20M0 10h20M0 15h20M5 0v20M10 0v20M15 0v20" /></Ico>
        <Ico w={15} h={16}><path d="M0 2h15M0 8h15M0 14h15" strokeWidth="3" strokeDasharray="3 3" /></Ico>
        <Caret />
      </StatusButton>
      <StatusButton $w={29} aria-label="动态输入"><Ico><path d="M5 1v9M0 5.500h10" /><path d="M8 11h12v7H8z" fill={c.light} stroke="none" /></Ico></StatusButton>
      <StatusButton $w={28} $on aria-label="正交"><Ico><path d="M2 0v18h18M2 13h5v5" /></Ico></StatusButton>
      <StatusButton $w={49} aria-label="极轴追踪"><Ico><circle cx="9" cy="10" r="7.500" /><path d="M9 10h11M9 10l7-8" /><path d="M9 10h8l-4-5z" fill="rgba(214,217,222,.5)" stroke="none" /></Ico><Caret /></StatusButton>
      <StatusButton $w={29} aria-label="对象追踪"><Ico><path d="M19 18H2L18 2" /><path d="M6 9l7 6" /></Ico></StatusButton>
      <StatusButton $w={28} $on aria-label="对象捕捉"><Ico><path d="M8 4h10v14H4V8" /><path d="M1 1h6v6H1z" /></Ico></StatusButton>
      <StatusButton $w={18} aria-label="捕捉设置"><Caret /></StatusButton>
      <StatusButton $w={30} aria-label="线宽显示"><Ico><path d="M0 4h9M0 8.500h9M0 13h9" strokeWidth="3" /><path d="M0 17.500h20" strokeWidth="2" /><path d="M11 4h9M11 8.500h9M11 13h9" strokeWidth="1.500" /></Ico></StatusButton>
      <StatusButton $w={34} aria-label="硬件加速">
        <Ico w={26} h={26}><circle cx="13" cy="11" r="11" fill="#2f6fb0" stroke="none" /><path d="M6 3c6 0 9 3 8 8l6 4" stroke="#8fc0ea" strokeWidth="3" /><path d="M7 0v14M1 7h12" stroke="#fff" strokeWidth="2" /><path d="M2 15h10v10H2z" fill="#f4a62a" stroke="none" /><path d="M12 19l5 5 9-11" stroke="#4ab54a" strokeWidth="3.500" /></Ico>
      </StatusButton>
      <StatusButton $w={32} aria-label="自定义"><Ico h={18}><path d="M0 1.500h20M0 9h20M0 16.500h20" strokeWidth="2.500" /></Ico></StatusButton>
    </StatusTools>
  </StatusBar>
);

const Sheet = () => (
  <SheetWindow>
    <BookTabs>
      <HomeTab>页</HomeTab>
      <BookTab><BookIcon>S</BookIcon>【千秋雪老师CAD教程】.xlsx</BookTab>
    </BookTabs>
    <BookToolbar>
      <FileMenu>文件</FileMenu>
      <Ico w={1}><path d="M.5 0v20" stroke="#dcdcdf" /></Ico>
      <IconButton aria-label="保存"><Ico w={18} h={18}><g stroke="#4a4a4a" strokeWidth="1.500"><path d="M1 1h12l4 4v12H1zM4 17V9h10v8M5 4h6" /></g></Ico></IconButton>
      <IconButton aria-label="输出"><Ico w={18} h={18}><g stroke="#4a4a4a" strokeWidth="1.500"><path d="M1 3h10c8 0 8 9 0 9H6M4 0v6M8 9v6c0 4-6 3-6 0s6-3 6-3" /></g></Ico></IconButton>
      <IconButton aria-label="打印"><Ico w={18} h={18}><g stroke="#4a4a4a" strokeWidth="1.500"><path d="M4 5V1h10v4M4 14H1V5h16v9h-3M4 10h10v7H4z" /></g></Ico></IconButton>
      <IconButton aria-label="打印预览"><Ico w={18} h={18}><g stroke="#4a4a4a" strokeWidth="1.500"><path d="M6 17H1V1h13v4" /><circle cx="11" cy="10" r="4.500" /><path d="M14 13l4 5" /></g></Ico></IconButton>
      <IconButton aria-label="撤销"><Ico w={17} h={18}><path d="M2 3v5h5M2 8c4-7 14-5 13 2-1 3-4 5-7 7" stroke="#bcbcbf" strokeWidth="1.600" /></Ico></IconButton>
      <IconButton aria-label="恢复"><Ico w={17} h={18}><path d="M15 3v5h-5M15 8C11 1 1 3 2 10c1 3 4 5 7 7" stroke="#bcbcbf" strokeWidth="1.600" /></Ico></IconButton>
      <Ico w={26} h={12}><path d="M8 1h9M9 6l4 4 4-4" stroke="#4a4a4a" strokeWidth="1.500" /></Ico>
      <StartTab>开始</StartTab>
    </BookToolbar>
    <FormulaBar>
      <NameBox>
        <NameInput aria-label="名称框" defaultValue="B330" />
        <Caret $size={3} $color="#8a8a8a" />
      </NameBox>
      <Ico w={74} h={20}><g transform="translate(53 0)" stroke="#4a4a4a" strokeWidth="1.500"><circle cx="8" cy="8" r="7" /><path d="M13 13l7 7M5 6.500h6M5 9.500h6" /></g></Ico>
      <Fx>fx</Fx>
      <FormulaInput aria-label="编辑栏" />
    </FormulaBar>
    <SheetBody>
      <Grid>
        <thead>
          <tr><ColHead>A</ColHead><ColHead $active /></tr>
        </thead>
        <tbody>
          <tr><NumCell $h={19} /><TextCell /></tr>
          {sheetRows.map((r) => (
            <tr key={r.t}>
              <NumCell $head={!!r.n}>{r.n}</NumCell>
              <TextCell $head={!!r.n}>{r.t}</TextCell>
            </tr>
          ))}
        </tbody>
      </Grid>
    </SheetBody>
    <SheetTabs>
      <SheetNav aria-label="上一张"><Ico w={10} h={16}><path d="M9 1L2 8l7 7" stroke="#555" /></Ico></SheetNav>
      <SheetTab>2 绘图</SheetTab>
      <SheetTab $active>3 修改、文字</SheetTab>
    </SheetTabs>
    <SheetFoot />
  </SheetWindow>
);

const CamtasiaIcon = ({ color }: { color: string }) => (
  <Ico w={30} h={30}><rect width="30" height="30" rx="3" fill={color} stroke="none" /><path d="M24 5H12c-4 0-6 2-6 6v8c0 4 2 6 6 6h12l-3-5h-8c-1.500 0-2-.5-2-2v-6c0-1.500.5-2 2-2h11z" fill="#fff" stroke="none" /></Ico>
);

const WindowsTaskbar = () => (
  <Taskbar>
    <StartButton aria-label="开始">
      <Ico><path d="M0 3l8-1v8H0zM9 2l11-2v10H9zM0 11h8v8l-8-1zM9 11h11v9L9 19z" fill="#fff" stroke="none" /></Ico>
    </StartButton>
    <TaskButton aria-label="Camtasia"><CamtasiaIcon color="#3c9a0a" /></TaskButton>
    <TaskButton $active aria-label="AutoCAD">
      <Ico w={30} h={30}><rect width="30" height="30" fill="#f3e4e2" stroke="none" /><path d="M12 4h7l7 22h-6l-1-4h-8l-2 4H4zM15 9l-3 9h5z" fill="#b3212b" fillRule="evenodd" stroke="none" /></Ico>
    </TaskButton>
    <TaskButton aria-label="WPS">
      <Ico w={28} h={28}><rect width="28" height="28" rx="4" fill="#2e7cf0" stroke="none" /><path d="M5 9h18M6 9l4 11 4-8 4 8 4-11M10 9l3 7M14 9l4 7" stroke="#fff" strokeWidth="1.800" /></Ico>
    </TaskButton>
    <TaskButton aria-label="Recorder"><CamtasiaIcon color="#f5513c" /></TaskButton>
    <Tray>
      <Ico w={18} h={10}><path d="M1 9l7-7 7 7" stroke="#fff" strokeWidth="1.500" /></Ico>
      <Ico w={18}><rect x="4" y="0" width="8" height="14" rx="2" fill="#fff" stroke="none" /><path d="M2 9c0 8 12 8 12 0M8 15v4M4 19.500h8" stroke="#fff" /></Ico>
      <Ico w={18} h={18}><path d="M9 0l8 2v6c0 5-3 8-8 10-5-2-8-5-8-10V2z" fill="#2f7df0" stroke="#fff" strokeWidth="1.600" /><path d="M5 7l4 4 4-4" stroke="#fff" strokeWidth="2.500" /></Ico>
      <Ico w={18}><path d="M5 3h14v10H5M12 13v4M8 17.500h8M1 2h4v5H1zM3 7v10" stroke="#fff" /></Ico>
      <Ico><path d="M1 7h3l5-5v16l-5-5H1z" stroke="#fff" /><path d="M12 7c1 2 1 4 0 6M15 5c2 3 2 7 0 10" stroke="#fff" /><path d="M18 3c3 4 3 10 0 14" stroke="#8790a3" /></Ico>
      <button>ENG</button>
      <Ico w={43}><path d="M11 2h18v14h-6l-3 4-3-4h-6z" stroke="#fff" strokeWidth="1.500" /></Ico>
      <Ico w={1} h={50}><path d="M.5 0v50" stroke="#3f4a63" /></Ico>
    </Tray>
    <Stamp><StampBox />tafe.cc</Stamp>
  </Taskbar>
);

export default function App() {
  return (
    <Desktop>
      <Global />
      <Windows>
        <CadWindow>
          <CadTitle />
          <MenuBar>
            {menus.map((m) => <button key={m}>{m}</button>)}
            <WindowButtons $small>
              <IconButton aria-label="最小化图形"><MinIcon /></IconButton>
              <IconButton aria-label="还原图形"><RestoreIcon /></IconButton>
              <IconButton aria-label="关闭图形"><CloseIcon /></IconButton>
            </WindowButtons>
          </MenuBar>
          <RibbonTabs>
            {ribbonTabs.map((t, i) => <RibbonTab key={t} $active={i === 0}>{t}</RibbonTab>)}
            <RibbonToggle aria-label="最小化功能区">
              <Ico w={19} h={9}><path d="M0 0h19v9H0z" fill="#eef0f6" stroke="none" /><path d="M7 6l2.500-3L12 6z" fill="#333" stroke="none" /></Ico>
              <Caret $size={3} />
            </RibbonToggle>
          </RibbonTabs>
          <CadRibbon />
          <DocTabs>
            <DocTab>开始</DocTab>
            <DocTab $active>Drawing1*<CloseIcon s={12} color="#a9adb5" /></DocTab>
            <AddTab aria-label="新图形"><PlusIcon /></AddTab>
          </DocTabs>
          <Model />
          <CadStatus />
        </CadWindow>
        <Sheet />
      </Windows>
      <WindowsTaskbar />
    </Desktop>
  );
}
